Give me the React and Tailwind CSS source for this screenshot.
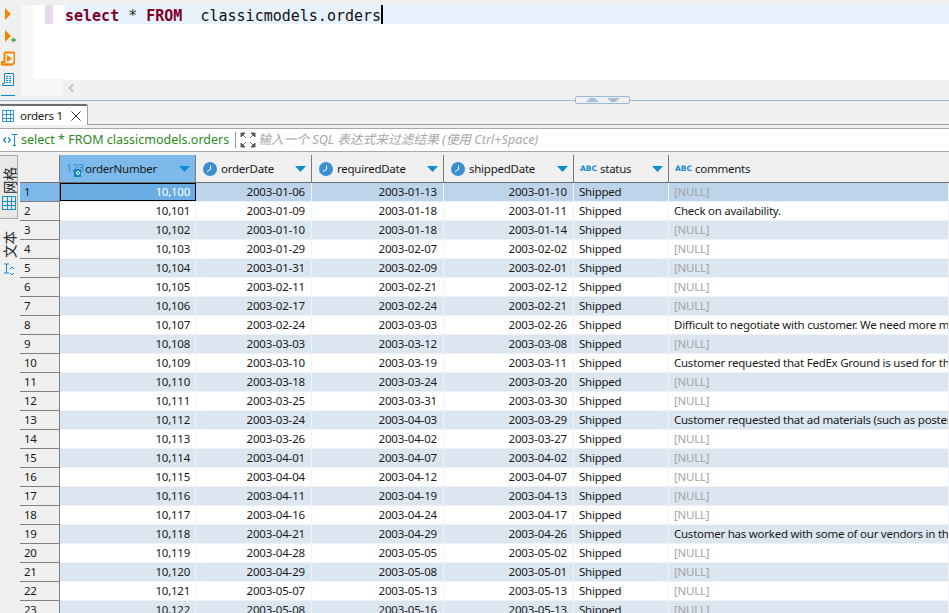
import React from "react";

const ROWS = [
  ["10,100", "2003-01-06", "2003-01-13", "2003-01-10", null],
  ["10,101", "2003-01-09", "2003-01-18", "2003-01-11", "Check on availability."],
  ["10,102", "2003-01-10", "2003-01-18", "2003-01-14", null],
  ["10,103", "2003-01-29", "2003-02-07", "2003-02-02", null],
  ["10,104", "2003-01-31", "2003-02-09", "2003-02-01", null],
  ["10,105", "2003-02-11", "2003-02-21", "2003-02-12", null],
  ["10,106", "2003-02-17", "2003-02-24", "2003-02-21", null],
  ["10,107", "2003-02-24", "2003-03-03", "2003-02-26", "Difficult to negotiate with customer. We need more marketing materials"],
  ["10,108", "2003-03-03", "2003-03-12", "2003-03-08", null],
  ["10,109", "2003-03-10", "2003-03-19", "2003-03-11", "Customer requested that FedEx Ground is used for this shipping"],
  ["10,110", "2003-03-18", "2003-03-24", "2003-03-20", null],
  ["10,111", "2003-03-25", "2003-03-31", "2003-03-30", null],
  ["10,112", "2003-03-24", "2003-04-03", "2003-03-29", "Customer requested that ad materials (such as posters, pamphlets) be included"],
  ["10,113", "2003-03-26", "2003-04-02", "2003-03-27", null],
  ["10,114", "2003-04-01", "2003-04-07", "2003-04-02", null],
  ["10,115", "2003-04-04", "2003-04-12", "2003-04-07", null],
  ["10,116", "2003-04-11", "2003-04-19", "2003-04-13", null],
  ["10,117", "2003-04-16", "2003-04-24", "2003-04-17", null],
  ["10,118", "2003-04-21", "2003-04-29", "2003-04-26", "Customer has worked with some of our vendors in the past and is aware"],
  ["10,119", "2003-04-28", "2003-05-05", "2003-05-02", null],
  ["10,120", "2003-04-29", "2003-05-08", "2003-05-01", null],
  ["10,121", "2003-05-07", "2003-05-13", "2003-05-13", null],
  ["10,122", "2003-05-08", "2003-05-16", "2003-05-13", null],
];

const GridIcon = ({ className }) => (
  <svg viewBox="0 0 14 14" className={className} fill="none" stroke="#1b8fd0" strokeWidth="1" shapeRendering="crispEdges">
    <rect x="0.5" y="0.5" width="13" height="13" />
    <path d="M0 5h14M0 9.5h14M5 0v14M9.5 0v14" />
  </svg>
);

const ClockIcon = () => (
  <svg viewBox="0 0 14 14" className="w-[14px] h-[14px] shrink-0">
    <circle cx="7" cy="7" r="7" fill="#3b8fcf" />
    <path d="M7.5 3.5V7.5L4 9.5" fill="none" stroke="#fff" strokeWidth="1" />
  </svg>
);

const SortArrow = () => (
  <svg viewBox="0 0 11 6" className="w-[11px] h-[6px] shrink-0">
    <path d="M0 0H11L5.5 6Z" fill="#0b8fd2" />
  </svg>
);

const NumberKeyIcon = () => (
  <span className="relative w-[17px] h-[16px] shrink-0 block">
    <span className="absolute left-0 top-[1px] text-[11px] tracking-[-0.4px] leading-[12px] text-[#2f8fd0]">123</span>
    <span className="absolute right-[2px] bottom-0 w-[7px] h-[8px] bg-[#1288cc] flex items-center justify-center">
      <span className="w-[4px] h-[4px] rounded-full border border-white"></span>
    </span>
  </span>
);

const AbcIcon = () => (
  <span className="w-[17px] shrink-0 text-[7.5px] leading-none font-bold tracking-normal text-[#1288cc] font-['DejaVu_Sans',sans-serif]">ABC</span>
);

const COLUMNS = [
  { name: "orderNumber", width: "w-[136px]", icon: <NumberKeyIcon />, gap: "gap-[2px] pl-[6px]", active: true },
  { name: "orderDate", width: "w-[116px]", icon: <ClockIcon />, gap: "gap-[4px] pl-[7px]" },
  { name: "requiredDate", width: "w-[132px]", icon: <ClockIcon />, gap: "gap-[4px] pl-[7px]" },
  { name: "shippedDate", width: "w-[130px]", icon: <ClockIcon />, gap: "gap-[4px] pl-[7px]" },
  { name: "status", width: "w-[95px]", icon: <AbcIcon />, gap: "gap-[3px] pl-[6px]" },
];

const HeaderCell = ({ col }) => (
  <div
    className={`${col.width} ${col.gap} pr-[5px] shrink-0 h-full flex items-center border-r border-[#7a7a7a] ${
      col.active ? "bg-[#7db9ea]" : "bg-[#f0f0f0]"
    }`}
  >
    {col.icon}
    <span className="flex-1 truncate">{col.name}</span>
    <SortArrow />
  </div>
);

const Row = ({ row, index }) => {
  const selected = index === 0;
  const tone = selected ? "bg-[#bed4ea]" : index % 2 === 0 ? "bg-[#dce6f1]" : "bg-white";
  const cell = `shrink-0 h-full px-[5px] border-r border-[#f0f4f8] leading-[18px] ${tone}`;
  const date = "text-right tracking-[-0.15px] pr-[6px]";
  return (
    <div className="flex h-[19px] shrink-0 border-b border-[#eef1f5]">
      <div
        className={`w-[40px] shrink-0 -mb-px pl-[4px] leading-[18px] border-b border-r border-[#808080] ${
          selected ? "bg-[#7db9ea]" : "bg-[#f0f0f0]"
        }`}
      >
        {index + 1}
      </div>
      <div
        className={`w-[136px] shrink-0 h-full px-[5px] text-right leading-[16px] border ${
          selected ? "bg-[#6aade2] border-black text-white" : `${tone} border-transparent border-r-[#f0f4f8]`
        }`}
      >
        {row[0]}
      </div>
      <div className={`w-[116px] ${cell} ${date}`}>{row[1]}</div>
      <div className={`w-[132px] ${cell} ${date}`}>{row[2]}</div>
      <div className={`w-[130px] ${cell} ${date}`}>{row[3]}</div>
      <div className={`w-[95px] ${cell}`}>Shipped</div>
      <div className={`flex-1 min-w-0 whitespace-nowrap overflow-hidden ${cell} ${row[4] ? "" : "text-[#a3a3a3]"}`}>
        {row[4] || "[NULL]"}
      </div>
    </div>
  );
};

const VerticalLabel = ({ children }) => (
  <span className="text-[13.5px] leading-[16px] tracking-normal text-[#222] rotate-180 [writing-mode:vertical-rl] [text-orientation:sideways] font-['Noto_Sans_CJK_SC',sans-serif]">
    {children}
  </span>
);

const EditorToolbar = () => (
  <div className="w-[21px] shrink-0 flex flex-col items-start pt-[8px]">
    <svg viewBox="0 0 6 12" className="ml-[5px] w-[6px] h-[12px]">
      <path d="M0 0L6 6L0 12Z" fill="#f58400" />
    </svg>
    <svg viewBox="0 0 11 13" className="ml-[5px] mt-[10px] w-[11px] h-[13px]">
      <path d="M0 0L6 6L0 12Z" fill="#f58400" />
      <path d="M8.5 7.5v5M6 10h5" stroke="#3fa535" strokeWidth="1.3" />
    </svg>
    <svg viewBox="0 0 14 15" className="ml-[1px] mt-[8px] w-[14px] h-[15px]">
      <path d="M3.5 1.5H13.5V11L11.5 13.5H2.5" fill="none" stroke="#f58400" strokeWidth="2" />
      <path d="M3.5 1.5V11H0.5V13.5H9" fill="none" stroke="#f58400" strokeWidth="2" />
      <path d="M6 4L11 7.5L6 11Z" fill="#f58400" />
    </svg>
    <svg viewBox="0 0 12 14" className="ml-[2px] mt-[7px] w-[12px] h-[14px]">
      <path d="M2.5 0.5H11.5V12.5H0.5V10.5H2.5Z" fill="none" stroke="#1288cc" />
      <path d="M4 3.5H10M4 5.5H10M4 7.5H10M4 9.5H10" stroke="#1288cc" strokeDasharray="2 1" />
    </svg>
    <div className="ml-[1px] mt-[8px] w-[14px] h-px bg-[#1288cc]"></div>
  </div>
);

const App = () => {
  return (
    <div className="w-[949px] h-[613px] overflow-hidden bg-[#f0f0f0] flex flex-col text-[11.5px] tracking-[-0.25px] text-[#1a1a1a] font-['Noto_Sans','Noto_Sans_CJK_SC',sans-serif]">
      {/* sql editor */}
      <div className="relative h-[101px] shrink-0 flex border-b border-[#9ab9d6]">
        <EditorToolbar />
        <div className="flex-1 min-w-0 pt-[5px] pb-[4px] flex">
          <div className="w-[42px] shrink-0 bg-[#f7f7f7] pl-[12px]">
            <div className="w-[30px] h-[74px] bg-white pl-[12px]">
              <div className="w-[8px] h-[19px] bg-[#e9d9ec]"></div>
            </div>
          </div>
          <div className="flex-1 min-w-0 flex flex-col">
            <div className="h-[75px] bg-white pl-[2px]">
              <div className="h-[19px] bg-[#e8f2fd] flex items-center whitespace-pre tracking-normal text-[15px] font-['DejaVu_Sans_Mono',monospace]">
                <span className="mt-[3px]">
                  <span className="font-bold text-[#7f0027]">select</span>
                  <span className="text-[#333]"> * </span>
                  <span className="font-bold text-[#7f0027]">FROM</span>
                  <span className="text-[#111]">  classicmodels.orders</span>
                </span>
                <span className="w-[2px] h-[19px] bg-black"></span>
              </div>
            </div>
            <div className="flex-1 pl-[5px] flex items-center">
              <svg viewBox="0 0 6 8" className="w-[6px] h-[8px]">
                <path d="M5 0.5L1.5 4L5 7.5" fill="none" stroke="#b5b5b5" strokeWidth="1.5" />
              </svg>
            </div>
          </div>
        </div>
        <div className="absolute left-[575px] top-[96px] w-[55px] h-[8px] rounded-[2px] bg-[#f0f0f0] border border-[#9ab9d6] flex items-center justify-center gap-[8px]">
          <svg viewBox="0 0 13 4" className="w-[13px] h-[4px]">
            <path d="M0 4L4.5 0H8.5L13 4Z" fill="#a3bdd6" />
          </svg>
          <svg viewBox="0 0 13 4" className="w-[13px] h-[4px]">
            <path d="M0 0H13L8.5 4H4.5Z" fill="#a3bdd6" />
          </svg>
        </div>
      </div>

      {/* result tabs */}
      <div className="h-[24px] shrink-0 pt-[3px] border-b border-[#a0a0a0]">
        <div className="w-[88px] h-[21px] -mb-px bg-white border-t-2 border-r border-t-[#6e6e6e] border-r-[#a0a0a0] rounded-tr-[2px] flex items-center pl-[2px]">
          <GridIcon className="w-[12px] h-[12px] shrink-0" />
          <span className="ml-[6px]">orders 1</span>
          <svg viewBox="0 0 10 10" className="ml-[8px] w-[10px] h-[10px]">
            <path d="M0.5 0.5L9.5 9.5M9.5 0.5L0.5 9.5" stroke="#333" fill="none" />
          </svg>
        </div>
      </div>

      {/* filter bar */}
      <div className="h-[24px] shrink-0 mt-[3px] bg-white border-y border-[#a8a8a8] flex items-center pl-[3px] tracking-normal">
        <span className="flex items-center shrink-0 w-[18px] text-[#1288cc]">
          <svg viewBox="0 0 15 12" className="w-[15px] h-[12px]">
            <path d="M3 3.5L0.7 6L3 8.5M5 3.5L7.3 6L5 8.5" fill="none" stroke="#1288cc" strokeWidth="1.2" />
            <path d="M8.5 0.5H14.5M11.5 0.5V11.5M10 11.5H13" fill="none" stroke="#1288cc" />
          </svg>
        </span>
        <span className="text-[#2c8a1d] text-[12.5px] whitespace-pre shrink-0">select * FROM classicmodels.orders</span>
        <span className="ml-[6px] w-px h-[16px] bg-[#999] shrink-0"></span>
        <svg viewBox="0 0 16 16" className="ml-[4px] w-[16px] h-[16px] shrink-0">
          <path d="M1 5V1H5L1 5ZM15 5V1H11L15 5ZM1 11V15H5L1 11ZM15 11V15H11L15 11Z" fill="#555" stroke="#555" />
          <path d="M2 2L6 6M14 2L10 6M2 14L6 10M14 14L10 10" stroke="#777" />
        </svg>
        <span className="ml-[2px] italic text-[12.7px] text-[#a8a8a8] whitespace-pre">输入一个 SQL 表达式来过滤结果 (使用 Ctrl+Space)</span>
      </div>

      {/* results */}
      <div className="flex-1 min-h-0 flex pt-[3px]">
        <div className="w-[20px] shrink-0 flex flex-col items-start">
          <div className="w-[18px] h-[64px] border border-l-0 border-[#a8a8a8] bg-[#e8e8e8] flex flex-col items-center pt-[11px]">
            <VerticalLabel>网格</VerticalLabel>
            <GridIcon className="w-[14px] h-[14px] mt-[2px]" />
          </div>
          <div className="w-[18px] mt-[12px] flex flex-col items-center">
            <VerticalLabel>文本</VerticalLabel>
            <svg viewBox="0 0 12 14" className="mt-[5px] w-[12px] h-[14px]">
              <path d="M1 1H6M3.5 1V10M1 10H6" fill="none" stroke="#1288cc" />
              <path d="M7 6L9 4L11 6M7 10L9 12L11 10" fill="none" stroke="#1288cc" />
            </svg>
          </div>
        </div>
        <div className="flex-1 min-w-0 flex flex-col">
          <div className="h-[28px] shrink-0 flex border-b border-[#6e6e6e]">
            <div className="w-[40px] shrink-0 border-r border-[#7a7a7a]"></div>
            {COLUMNS.map((col) => (
              <HeaderCell key={col.name} col={col} />
            ))}
            <div className="flex-1 min-w-0 pl-[6px] flex items-center gap-[3px]">
              <AbcIcon />
              <span>comments</span>
            </div>
          </div>
          {ROWS.map((row, i) => (
            <Row key={row[0]} row={row} index={i} />
          ))}
        </div>
      </div>
    </div>
  );
};

export default App;
